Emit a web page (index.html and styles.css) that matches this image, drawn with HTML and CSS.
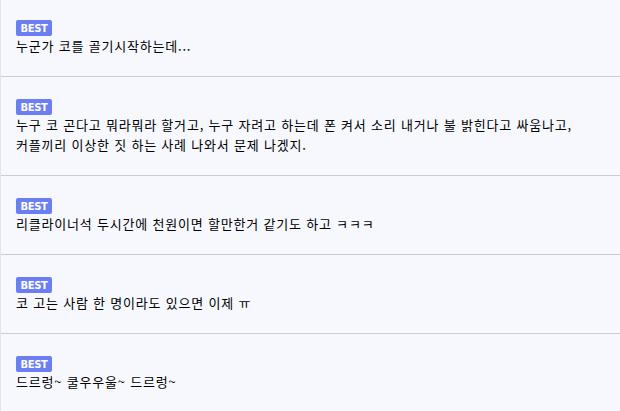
FILE: index.html
```
<!DOCTYPE html>
<html lang="ko">
<head>
<meta charset="utf-8">
<link rel="stylesheet" href="styles.css">
</head>
<body>
<ul class="list">
  <li class="item first">
    <span class="badge">BEST</span>
    <p class="text">누군가 코를 골기시작하는데...</p>
  </li>
  <li class="item">
    <span class="badge">BEST</span>
    <p class="text">누구 코 곤다고 뭐라뭐라 할거고, 누구 자려고 하는데 폰 켜서 소리 내거나 불 밝힌다고 싸움나고,<br>커플끼리 이상한 짓 하는 사례 나와서 문제 나겠지.</p>
  </li>
  <li class="item">
    <span class="badge">BEST</span>
    <p class="text">리클라이너석 두시간에 천원이면 할만한거 같기도 하고 ㅋㅋㅋ</p>
  </li>
  <li class="item">
    <span class="badge">BEST</span>
    <p class="text">코 고는 사람 한 명이라도 있으면 이제 ㅠ</p>
  </li>
  <li class="item">
    <span class="badge">BEST</span>
    <p class="text">드르렁~ 쿨우우울~ 드르렁~</p>
  </li>
</ul>
</body>
</html>
```

FILE: styles.css
```
html, body {
  margin: 0;
  padding: 0;
  background: #f6f8fd;
}
body {
  font-family: "Noto Sans CJK KR", "Noto Sans", sans-serif;
  color: #000;
  border-left: 1px solid #dfe5f3;
  min-height: 411px;
  box-sizing: border-box;
}
.list {
  list-style: none;
  margin: 0;
  padding: 0;
}
.item {
  padding: 22px 16px 20px 15px;
  border-bottom: 1px solid #c8ccd3;
  display: flex;
  flex-direction: column;
  align-items: flex-start;
}
.item.first {
  padding-top: 20px;
}
.item:last-child {
  border-bottom: none;
}
.badge {
  display: inline-flex;
  align-items: center;
  justify-content: center;
  width: 36px;
  height: 16px;
  background: #6b7ff2;
  color: #fff;
  font-family: "DejaVu Sans", sans-serif;
  font-weight: bold;
  font-size: 10px;
  border-radius: 2px;
  letter-spacing: -0.4px;
}
.text {
  margin: 0;
  font-size: 13px;
  letter-spacing: 0.8px;
  line-height: 20px;
}
```
